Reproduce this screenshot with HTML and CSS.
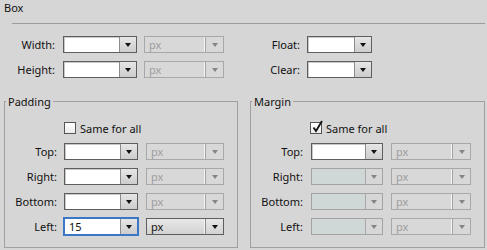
FILE: index.html
```html
<!DOCTYPE html>
<html lang="en">
<head>
    <meta charset="UTF-8">
    <meta name="viewport" content="width=device-width, initial-scale=1.0">
    <title>Box</title>
    <link rel="stylesheet" href="styles.css">
</head>
<body>
    <div class="title">Box</div>
    <div class="divider"></div>

    <div class="size">
        <div class="row">
            <label class="lbl lbl-size">Width:</label>
            <div class="combo w-size"><span class="value"></span><span class="btn"><i class="arrow"></i></span></div>
            <div class="select disabled w-unit"><span class="value">px</span><span class="btn"><i class="arrow"></i></span></div>
            <label class="lbl lbl-float">Float:</label>
            <div class="combo w-float"><span class="value"></span><span class="btn"><i class="arrow"></i></span></div>
        </div>
        <div class="row">
            <label class="lbl lbl-size">Height:</label>
            <div class="combo w-size"><span class="value"></span><span class="btn"><i class="arrow"></i></span></div>
            <div class="select disabled w-unit"><span class="value">px</span><span class="btn"><i class="arrow"></i></span></div>
            <label class="lbl lbl-float">Clear:</label>
            <div class="combo w-float"><span class="value"></span><span class="btn"><i class="arrow"></i></span></div>
        </div>
    </div>

    <div class="groups">
        <fieldset class="group group-padding">
            <legend>Padding</legend>
            <div class="same"><span class="check"></span>Same for all</div>
            <div class="frow">
                <label class="lbl lbl-group">Top:</label>
                <div class="combo w-pad"><span class="value"></span><span class="btn"><i class="arrow"></i></span></div>
                <div class="select disabled w-pad-unit"><span class="value">px</span><span class="btn"><i class="arrow"></i></span></div>
            </div>
            <div class="frow">
                <label class="lbl lbl-group">Right:</label>
                <div class="combo w-pad"><span class="value"></span><span class="btn"><i class="arrow"></i></span></div>
                <div class="select disabled w-pad-unit"><span class="value">px</span><span class="btn"><i class="arrow"></i></span></div>
            </div>
            <div class="frow">
                <label class="lbl lbl-group">Bottom:</label>
                <div class="combo w-pad"><span class="value"></span><span class="btn"><i class="arrow"></i></span></div>
                <div class="select disabled w-pad-unit"><span class="value">px</span><span class="btn"><i class="arrow"></i></span></div>
            </div>
            <div class="frow">
                <label class="lbl lbl-group">Left:</label>
                <div class="combo w-pad focus"><span class="value">15</span><span class="btn"><i class="arrow"></i></span></div>
                <div class="select w-pad-unit"><span class="value">px</span><span class="btn"><i class="arrow"></i></span></div>
            </div>
        </fieldset>

        <fieldset class="group group-margin">
            <legend>Margin</legend>
            <div class="same">
                <span class="check">
                    <svg width="13" height="14" viewBox="0 0 13 14"><path d="M2.5 7.5 L5 11 L11 1" fill="none" stroke="#111" stroke-width="1.8"/></svg>
                </span>Same for all
            </div>
            <div class="frow">
                <label class="lbl lbl-group">Top:</label>
                <div class="combo w-mar"><span class="value"></span><span class="btn"><i class="arrow"></i></span></div>
                <div class="select disabled w-mar-unit"><span class="value">px</span><span class="btn"><i class="arrow"></i></span></div>
            </div>
            <div class="frow">
                <label class="lbl lbl-group">Right:</label>
                <div class="combo disabled w-mar"><span class="value"></span><span class="btn"><i class="arrow"></i></span></div>
                <div class="select disabled w-mar-unit"><span class="value">px</span><span class="btn"><i class="arrow"></i></span></div>
            </div>
            <div class="frow">
                <label class="lbl lbl-group">Bottom:</label>
                <div class="combo disabled w-mar"><span class="value"></span><span class="btn"><i class="arrow"></i></span></div>
                <div class="select disabled w-mar-unit"><span class="value">px</span><span class="btn"><i class="arrow"></i></span></div>
            </div>
            <div class="frow">
                <label class="lbl lbl-group">Left:</label>
                <div class="combo disabled w-mar"><span class="value"></span><span class="btn"><i class="arrow"></i></span></div>
                <div class="select disabled w-mar-unit"><span class="value">px</span><span class="btn"><i class="arrow"></i></span></div>
            </div>
        </fieldset>
    </div>
</body>
</html>
```

FILE: styles.css
```css
* {
    box-sizing: border-box;
}

body {
    margin: 0;
    width: 487px;
    height: 250px;
    overflow: hidden;
    background-color: #d6d6d6;
    font-family: "Noto Sans", "DejaVu Sans", sans-serif;
    font-size: 11px;
    line-height: 13px;
    color: #111;
}

.title {
    padding: 1px 4px 0;
}

.divider {
    height: 1px;
    margin: 9px 2px 0 12px;
    background-color: #9c9c9c;
}

.size {
    padding-top: 12px;
}

.row {
    display: flex;
    align-items: center;
    height: 17px;
    margin-bottom: 8px;
}

.lbl {
    text-align: right;
    flex-shrink: 0;
}

.lbl-size {
    width: 55px;
    margin-right: 8px;
}

.lbl-float {
    width: 76px;
    margin-right: 7px;
}

.lbl-group {
    width: 52px;
    margin-right: 7px;
}

.group-margin .lbl-group {
    margin-right: 8px;
}

/* combo box: editable field + drop button */
.combo,
.select {
    display: flex;
    height: 17px;
    flex-shrink: 0;
    border: 1px solid #5e5e5e;
}

.combo {
    background-color: #fff;
    box-shadow: inset 1px 1px 0 #c8c8c8;
}

.value {
    flex: 1;
    padding-left: 4px;
    line-height: 15px;
}

.btn {
    display: flex;
    align-items: center;
    justify-content: center;
    border-left: 1px solid #8c8c8c;
    background: linear-gradient(#e6e6e6, #cdcdcd);
}

.combo .btn {
    width: 17px;
}

.select .btn {
    width: 18px;
    box-shadow: -1px 0 0 #f4f4f4;
}

.arrow {
    width: 0;
    height: 0;
    border-left: 3px solid transparent;
    border-right: 3px solid transparent;
    border-top: 4px solid #111;
}

.select {
    background: linear-gradient(#e8e8e8, #d2d2d2);
}

.select .btn {
    background: none;
}

.select.disabled {
    border-color: #a8a8a8;
    background: #d8d8d8;
    color: #9d9d9d;
}

.select.disabled .btn {
    border-left-color: #a4a4a4;
}

.disabled .arrow {
    border-top-color: #858585;
}

.combo.disabled {
    border-color: #a3a3a3;
    background-color: #cfd8d7;
    box-shadow: none;
}

.combo.disabled .btn {
    background: #d7d7d7;
    border-left-color: #a8a8a8;
}

.combo.focus {
    border-color: #3a78c6;
    box-shadow: 0 0 0 1px #3a78c6;
}

.w-size { width: 74px; }
.w-unit { width: 80px; margin-left: 7px; }
.w-float { width: 65px; }
.w-pad { width: 74px; }
.w-pad-unit { width: 78px; margin-left: 8px; }
.w-mar { width: 72px; }
.w-mar-unit { width: 80px; margin-left: 8px; }

/* Padding / Margin groups */
.groups {
    display: flex;
    gap: 12px;
    margin-top: 17px;
    padding-left: 4px;
}

.group {
    margin: 0;
    padding: 14px 0 12px;
    min-width: 0;
    border: 1px solid #a0a0a0;
}

.group-padding {
    width: 234px;
}

.group-margin {
    width: 235px;
}

legend {
    margin-left: 1px;
    padding: 0 2px;
    line-height: 13px;
}

.same {
    display: flex;
    align-items: center;
    height: 12px;
    margin-left: 59px;
}

.check {
    position: relative;
    width: 12px;
    height: 12px;
    margin-right: 4px;
    border: 1px solid #555;
    background: linear-gradient(#fff, #ececec);
}

.check svg {
    position: absolute;
    left: 0;
    top: -3px;
}

.frow {
    display: flex;
    align-items: center;
    height: 17px;
    margin-top: 8px;
}

.same + .frow {
    margin-top: 9px;
}
```
